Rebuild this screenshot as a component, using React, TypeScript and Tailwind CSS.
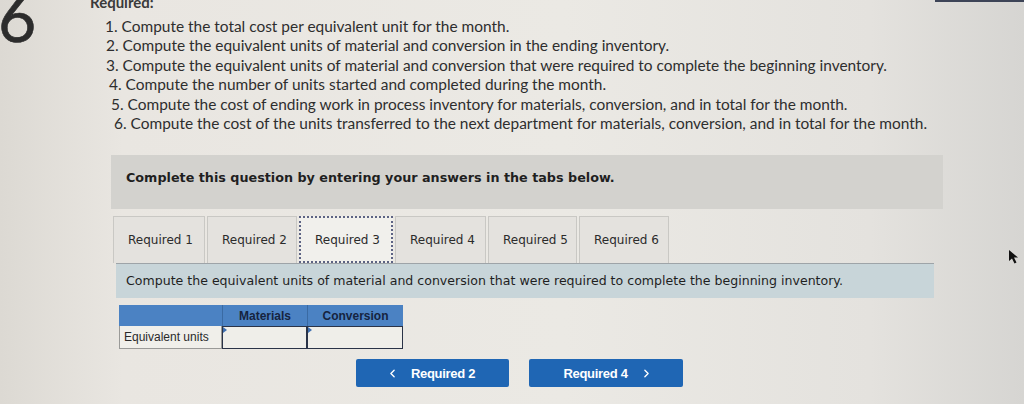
import { ChevronLeft, ChevronRight } from "lucide-react";

const requirements = [
  { text: "1. Compute the total cost per equivalent unit for the month.", indent: "pl-[15px]" },
  { text: "2. Compute the equivalent units of material and conversion in the ending inventory.", indent: "pl-[16px]" },
  {
    text: "3. Compute the equivalent units of material and conversion that were required to complete the beginning inventory.",
    indent: "pl-[16px]",
  },
  { text: "4. Compute the number of units started and completed during the month.", indent: "pl-[19px]" },
  {
    text: "5. Compute the cost of ending work in process inventory for materials, conversion, and in total for the month.",
    indent: "pl-[21px]",
  },
  {
    text: "6. Compute the cost of the units transferred to the next department for materials, conversion, and in total for the month.",
    indent: "pl-[24px]",
  },
];

const tabs = [
  { label: "Required 1", width: "w-[92px]" },
  { label: "Required 2", width: "w-[90px]" },
  { label: "Required 3", width: "w-[94px]", active: true },
  { label: "Required 4", width: "w-[91px]" },
  { label: "Required 5", width: "w-[89px]" },
  { label: "Required 6", width: "w-[90px]" },
];

function AnswerCell({ width }: { width: string }) {
  return (
    <div className={`relative ${width} h-full border-[1.5px] border-[#2a3347] bg-[#efeee9]`}>
      <span className="absolute left-0 top-0 h-0 w-0 border-y-[3px] border-l-[4px] border-y-transparent border-l-[#3f6fb0]" />
    </div>
  );
}

export default function App() {
  return (
    <div className="relative h-[404px] w-[1024px] overflow-hidden bg-[linear-gradient(90deg,#dcd9d3_0%,#e9e6e1_12%,#ebe9e4_55%,#e4e2de_85%,#d6d5d2_100%)] font-['Lato',sans-serif] text-[#2e2e2e]">
      {/* question header */}
      <div className="flex">
        <div className="w-[92px] shrink-0 -mt-[16px] -ml-[2px] text-[66px] leading-none font-normal text-[#2c2c2c] [-webkit-text-stroke:0.6px_#2c2c2c]">
          6
        </div>
        <div className="flex flex-col">
          <div className="-mt-[7px] h-[18px] text-[15px] leading-[18px] font-bold text-[#3a3a3a]">
            Required:
          </div>
          <ol className="mt-[6px] text-[15.45px] leading-[19.4px]">
            {requirements.map((r) => (
              <li key={r.text} className={`${r.indent} whitespace-nowrap`}>
                {r.text}
              </li>
            ))}
          </ol>
        </div>
      </div>

      <div className="ml-[111px] mt-[22px] flex flex-col items-start">
        {/* instruction banner */}
        <div className="h-[54px] w-[832px] bg-[#d3d2ce] pl-[15px] pt-[15px] font-['DejaVu_Sans',Verdana,sans-serif] text-[12.75px] font-bold leading-[16px] text-[#1f1f1f]">
          Complete this question by entering your answers in the tabs below.
        </div>

        {/* tabs */}
        <div className="ml-[2px] mt-[7px] flex h-[47px] gap-[2px]">
          {tabs.map((t) => (
            <div
              key={t.label}
              className={`${t.width} flex items-center pl-[14px] font-['DejaVu_Sans',Verdana,sans-serif] text-[12px] text-[#2b2b2b] ${
                t.active
                  ? "border-2 border-dotted border-[#5d6383] bg-[#f1f0ec] pl-[13px]"
                  : "border border-b-0 border-[#c9c8c4] bg-[#e4e2de]"
              }`}
            >
              {t.label}
            </div>
          ))}
        </div>

        {/* tab panel */}
        <div className="ml-[5px] flex h-[35px] w-[818px] items-center border-t border-[#9ea4a8] bg-[#c8d5d9] pl-[10px] font-['DejaVu_Sans',Verdana,sans-serif] text-[12.57px] text-[#1f1f1f]">
          Compute the equivalent units of material and conversion that were required to complete the beginning inventory.
        </div>

        {/* answer table */}
        <div className="ml-[8px] mt-[7px] flex flex-col font-['Liberation_Sans',Arial,sans-serif] text-[12px]">
          <div className="flex h-[21px] bg-[#4b82c3] font-bold text-[#16243f]">
            <div className="w-[103px]" />
            <div className="flex w-[85px] items-center justify-center border-l border-[#3a6aa3]">Materials</div>
            <div className="flex w-[96px] items-center justify-center border-l border-[#3a6aa3]">Conversion</div>
          </div>
          <div className="flex h-[23px]">
            <div className="flex w-[103px] items-center border border-t-0 border-[#9a9a98] bg-[#f0efea] pl-[4px] text-[#2a2a2a]">
              Equivalent units
            </div>
            <AnswerCell width="w-[85px]" />
            <AnswerCell width="w-[96px]" />
          </div>
        </div>

        {/* navigation */}
        <div className="ml-[245px] mt-[10px] flex gap-[20px] font-['Liberation_Sans',Arial,sans-serif] text-[13px] font-bold text-white">
          <button className="flex h-[28px] w-[153px] items-center justify-center gap-[12px] rounded-[2px] bg-[#1f66b4] pr-[4px] tracking-[-0.3px]">
            <ChevronLeft size={13} strokeWidth={2.5} />
            Required 2
          </button>
          <button className="flex h-[28px] w-[154px] items-center justify-center gap-[12px] rounded-[2px] bg-[#1f66b4] pl-[4px] tracking-[-0.3px]">
            Required 4
            <ChevronRight size={13} strokeWidth={2.5} />
          </button>
        </div>
      </div>

      {/* edge of another window and mouse pointer */}
      <div className="absolute right-0 top-0 h-[2px] w-[89px] bg-[#3d4457]" />
      <svg className="absolute left-[1008px] top-[249px]" width="12" height="16" viewBox="0 0 12 16">
        <path d="M1 1 L1 12 L4 9.5 L6.5 14.5 L8.5 13.5 L6 8.5 L10 8.5 Z" fill="#111" />
      </svg>
    </div>
  );
}
